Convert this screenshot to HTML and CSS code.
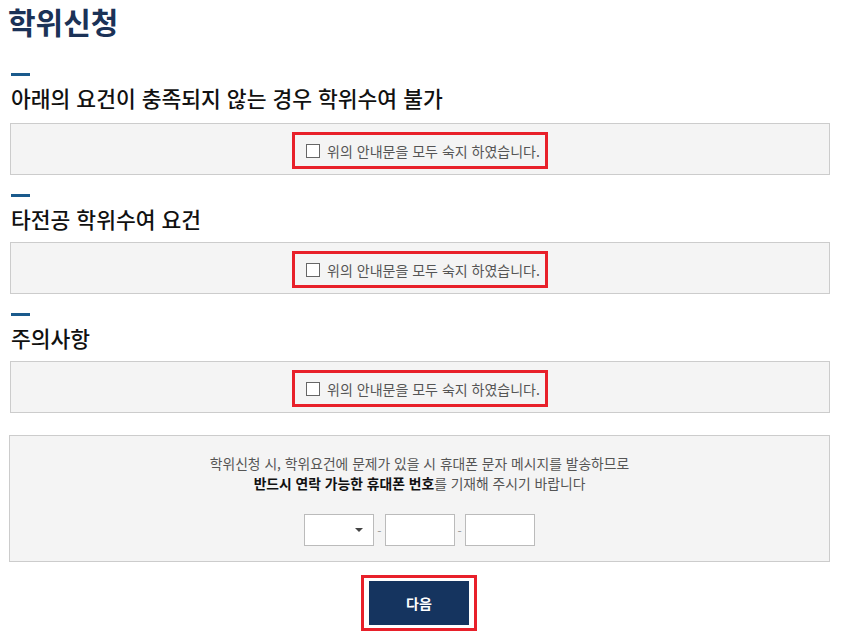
FILE: index.html
```html
<!DOCTYPE html>
<html lang="ko">
<head>
    <meta charset="UTF-8">
    <meta name="viewport" content="width=device-width, initial-scale=1.0">
    <title>학위신청</title>
    <link rel="stylesheet" href="styles.css">
</head>

<body>
    <div class="page">
        <h1 class="page-title">학위신청</h1>

        <!-- 요건 1 -->
        <section class="section">
            <span class="bar"></span>
            <h2 class="section-title">아래의 요건이 충족되지 않는 경우 학위수여 불가</h2>
            <div class="agree-box">
                <label class="agree">
                    <input type="checkbox" class="check">
                    <span>위의 안내문을 모두 숙지 하였습니다.</span>
                </label>
            </div>
        </section>

        <!-- 요건 2 -->
        <section class="section">
            <span class="bar"></span>
            <h2 class="section-title">타전공 학위수여 요건</h2>
            <div class="agree-box">
                <label class="agree">
                    <input type="checkbox" class="check">
                    <span>위의 안내문을 모두 숙지 하였습니다.</span>
                </label>
            </div>
        </section>

        <!-- 주의사항 -->
        <section class="section">
            <span class="bar"></span>
            <h2 class="section-title">주의사항</h2>
            <div class="agree-box">
                <label class="agree">
                    <input type="checkbox" class="check">
                    <span>위의 안내문을 모두 숙지 하였습니다.</span>
                </label>
            </div>
        </section>

        <!-- 휴대폰 -->
        <div class="phone-box">
            <p class="phone-text">학위신청 시, 학위요건에 문제가 있을 시 휴대폰 문자 메시지를 발송하므로</p>
            <p class="phone-text"><strong>반드시 연락 가능한 휴대폰 번호</strong>를 기재해 주시기 바랍니다</p>
            <div class="phone-row">
                <div class="phone-select">
                    <span class="arrow"></span>
                </div>
                <span class="dash">-</span>
                <input type="text" class="phone-input">
                <span class="dash">-</span>
                <input type="text" class="phone-input">
            </div>
        </div>

        <div class="next">
            <div class="next-outline">
                <button class="next-btn" type="button">다음</button>
            </div>
        </div>
    </div>
</body>

</html>
```

FILE: styles.css
```css
* {
    margin: 0;
    padding: 0;
    box-sizing: border-box;
}

body {
    font-family: 'Noto Sans CJK KR', 'Noto Sans', sans-serif;
    background-color: #ffffff;
    color: #111111;
}

.page {
    padding: 0 16px 0 10px;
}

.page-title {
    font-size: 30px;
    font-weight: 700;
    color: #1b3257;
    line-height: 42px;
    margin-left: -2px;
    margin-bottom: 31px;
}

/* 섹션 */
.section {
    display: flex;
    flex-direction: column;
    margin-bottom: 19px;
}

.bar {
    display: block;
    width: 19px;
    height: 3px;
    background-color: #1a5a8c;
    margin-left: 1px;
}

.section-title {
    font-size: 21.5px;
    font-weight: 500;
    line-height: 30px;
    color: #111111;
    margin-top: 7px;
    margin-bottom: 8px;
    margin-left: 1px;
}

.section:first-of-type .section-title {
    margin-bottom: 10px;
}

.agree-box {
    display: flex;
    justify-content: center;
    border: 1px solid #cccccc;
    background-color: #f4f4f4;
    padding: 8px 0 5px;
}

.agree {
    display: flex;
    align-items: center;
    gap: 7px;
    border: 3px solid #e8202a;
    padding: 0 5px 0 11px;
    height: 37px;
    font-size: 14px;
    color: #555555;
}

.check {
    appearance: none;
    width: 14px;
    height: 14px;
    border: 1px solid #666666;
    background-color: #ffffff;
    margin: 0;
}

/* 휴대폰 */
.phone-box {
    border: 1px solid #cccccc;
    background-color: #f4f4f4;
    margin-top: 22px;
    margin-left: -1px;
    padding: 17px 0 15px;
    text-align: center;
}

.phone-text {
    font-size: 13.8px;
    line-height: 20px;
    color: #555555;
}

.phone-text strong {
    color: #111111;
    font-weight: 700;
}

.phone-row {
    display: flex;
    justify-content: center;
    align-items: center;
    gap: 3px;
    margin-top: 21px;
}

.phone-select,
.phone-input {
    width: 70px;
    height: 32px;
    border: 1px solid #bbbbbb;
    background-color: #ffffff;
}

.phone-select {
    display: flex;
    justify-content: flex-end;
    align-items: center;
    padding-right: 10px;
}

.arrow {
    width: 0;
    height: 0;
    border-left: 4px solid transparent;
    border-right: 4px solid transparent;
    border-top: 4px solid #444444;
}

.dash {
    font-size: 12px;
    color: #999999;
}

/* 다음 버튼 */
.next {
    display: flex;
    justify-content: center;
    margin-top: 13px;
    margin-left: -2px;
}

.next-outline {
    border: 3px solid #e8202a;
    padding: 3px 5px;
}

.next-btn {
    width: 100px;
    height: 44px;
    border: none;
    background-color: #15345f;
    color: #ffffff;
    font-family: 'Noto Sans CJK KR', sans-serif;
    font-size: 14px;
    font-weight: 700;
    cursor: pointer;
}
```
